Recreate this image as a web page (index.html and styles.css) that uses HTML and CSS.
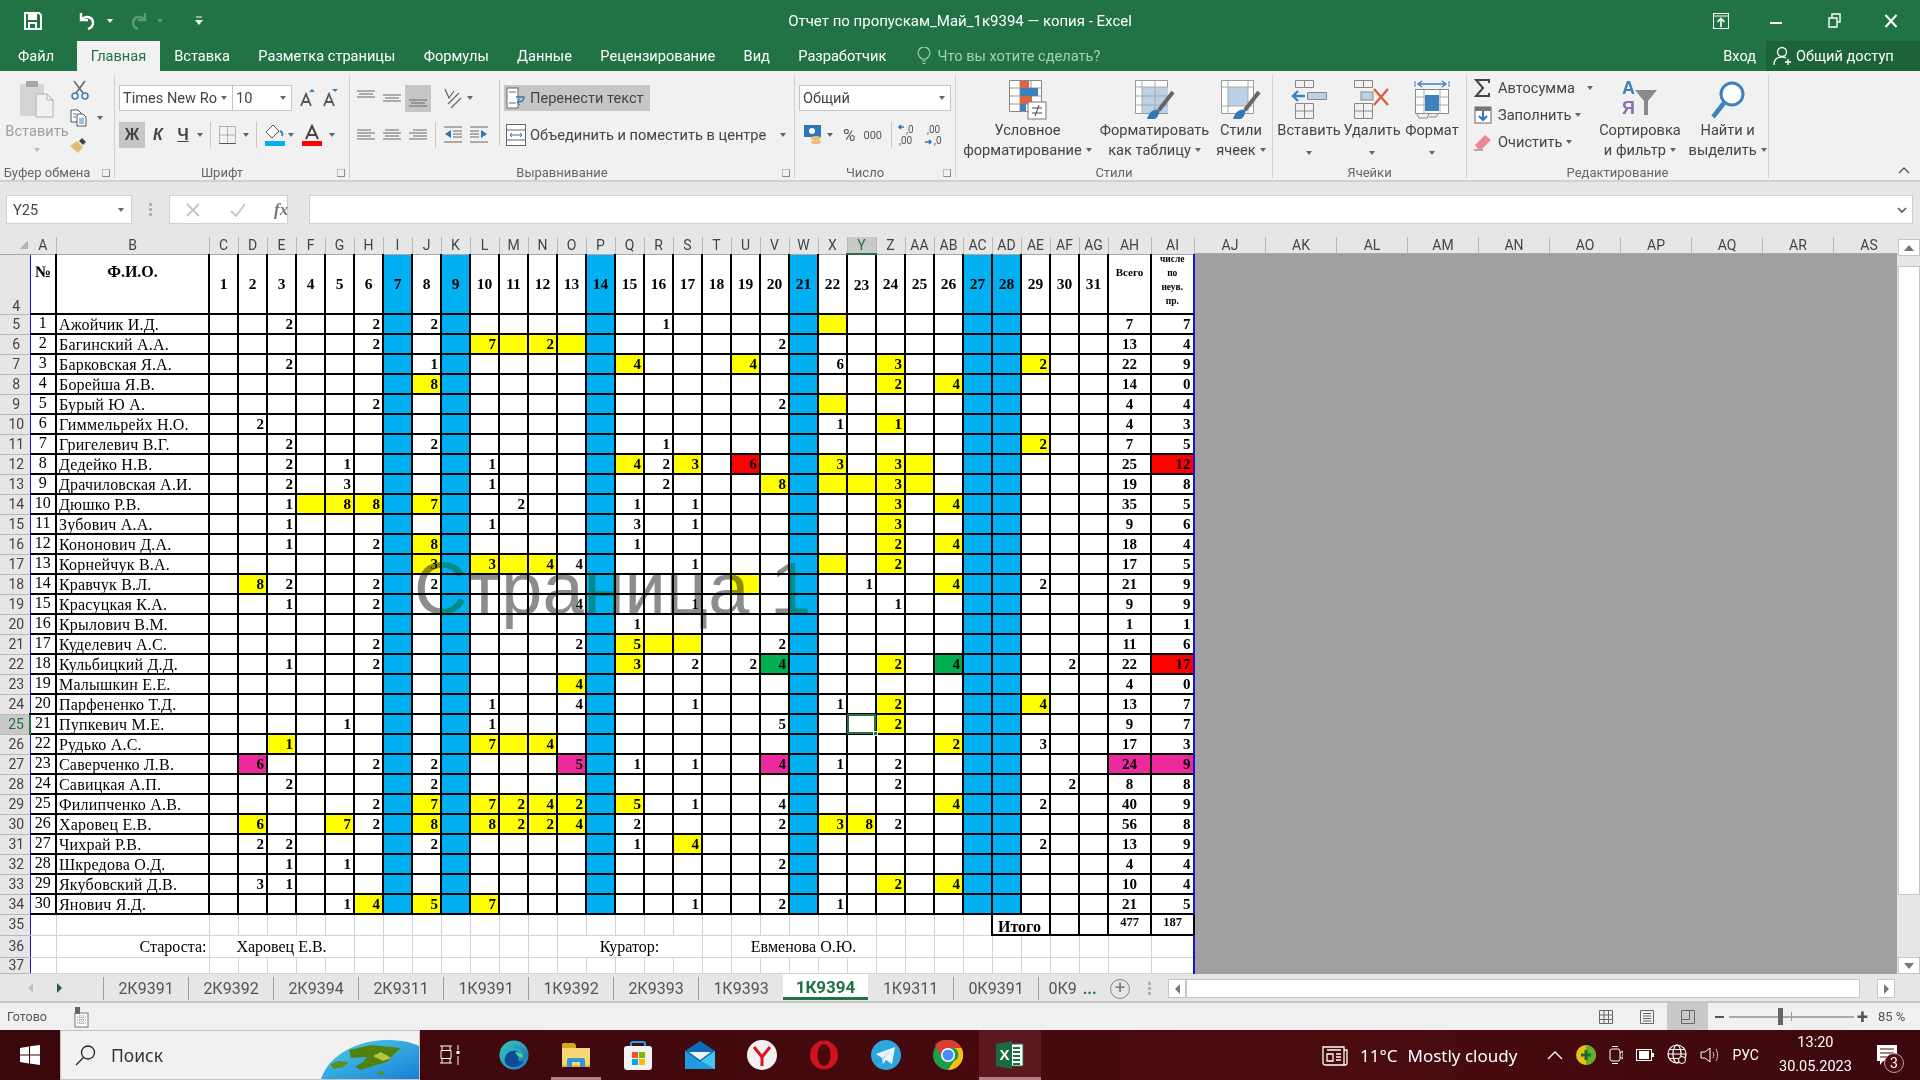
FILE: index.html
```html
<!DOCTYPE html>
<html lang="ru">

<head>
    <meta charset="utf-8">
    <title>Отчет по пропускам_Май_1к9394 — копия - Excel</title>
    <link rel="stylesheet" href="styles.css">
</head>

<body>
    <div class="app">
        <!-- title bar -->
        <header class="titlebar">
            <div class="qat">
                <svg class="qat-save" width="20" height="18" viewBox="0 0 20 18"><path d="M2 1h14l2 2v14H2z" fill="none" stroke="#fff" stroke-width="2"/><rect x="5" y="2" width="9" height="6" fill="#fff"/><rect x="6" y="11" width="7" height="6" fill="none" stroke="#fff" stroke-width="2"/></svg>
                <svg class="qat-undo" width="20" height="20" viewBox="0 0 20 20"><path d="M3 2v7h7" fill="none" stroke="#fff" stroke-width="2.4"/><path d="M4 8c4-4 11-2 11 4 0 3-2 5-5 6" fill="none" stroke="#fff" stroke-width="2.4"/></svg>
                <span class="tri tri-white qat-caret-a"></span>
                <svg class="qat-redo" width="20" height="20" viewBox="0 0 20 20"><path d="M17 2v7h-7" fill="none" stroke="#5c9b78" stroke-width="2.4"/><path d="M16 8c-4-4-11-2-11 4 0 3 2 5 5 6" fill="none" stroke="#5c9b78" stroke-width="2.4"/></svg>
                <span class="tri tri-faded qat-caret-b"></span>
                <svg class="qat-more" width="8" height="10" viewBox="0 0 8 10"><path d="M1 1h6" stroke="#fff"/><path d="M0 4h8L4 9z" fill="#fff"/></svg>
            </div>
            <div class="doc-title">Отчет по пропускам_Май_1к9394 — копия - Excel</div>
            <div class="win-btns">
                <svg width="16" height="16" viewBox="0 0 16 16"><rect x=".5" y=".5" width="15" height="15" fill="none" stroke="#fff"/><path d="M1 3h14" stroke="#fff"/><path d="M8 14V6M4.5 9 8 5.5 11.5 9" fill="none" stroke="#fff" stroke-width="1.6"/></svg>
                <svg class="win-min" width="12" height="12" viewBox="0 0 12 12"><path d="M0 8h12" stroke="#fff" stroke-width="2"/></svg>
                <svg class="win-max" width="14" height="16" viewBox="0 0 14 16"><path d="M1 5h8v9H1zM4 5V1h8v8H9" fill="none" stroke="#fff" stroke-width="1.4"/></svg>
                <svg class="win-close" width="14" height="14" viewBox="0 0 14 14"><path d="M1.5 1 12.5 13M12.5 1 1.5 13" stroke="#fff" stroke-width="2"/></svg>
            </div>
        </header>

        <!-- ribbon tabs -->
        <nav class="tabs">
            <span class="tab tab-file">Файл</span>
            <span class="tab tab-active">Главная</span>
            <span class="tab">Вставка</span>
            <span class="tab">Разметка страницы</span>
            <span class="tab">Формулы</span>
            <span class="tab">Данные</span>
            <span class="tab">Рецензирование</span>
            <span class="tab">Вид</span>
            <span class="tab">Разработчик</span>
            <span class="tell-me">
                <svg width="14" height="18" viewBox="0 0 14 18"><path d="M4.5 12C3 10 1 9 1 6a6 6 0 0 1 12 0c0 3-2 4-3.500 6z" fill="none" stroke="#a8cdb8" stroke-width="1.200"/><path d="M5 14h4M5.500 16.500h3" stroke="#a8cdb8" stroke-width="1.200"/></svg>
                Что вы хотите сделать?
            </span>
            <span class="sign-in">Вход</span>
            <span class="share">
                <svg width="20" height="20" viewBox="0 0 20 20"><circle cx="9" cy="6" r="4.500" fill="none" stroke="#fff" stroke-width="1.300"/><path d="M1 19c0-5 3-8 8-8 2 0 3 .5 4 1" fill="none" stroke="#fff" stroke-width="1.300"/><path d="M15 13v6M12 16h6" stroke="#fff" stroke-width="1.300"/></svg>
                Общий доступ
            </span>
        </nav>

        <!-- ribbon -->
        <section class="ribbon">
            <div class="group g-clip">
                <div class="group-body clip-body">
                    <div class="paste">
                        <svg width="36" height="38" viewBox="0 0 36 38"><rect x="1" y="4" width="24" height="32" fill="#d6d3d3"/><rect x="7" y="1" width="12" height="6" rx="1" fill="#a9a6a6"/><path d="M17 14h11l6 6v17H17z" fill="#f3f0f3" stroke="#b3b0b0"/><path d="M28 14v6h6" fill="none" stroke="#b3b0b0"/></svg>
                        <span class="paste-label">Вставить</span>
                        <span class="tri tri-faint"></span>
                    </div>
                    <div class="clip-tools">
                        <svg width="20" height="20" viewBox="0 0 20 20"><path d="M4 1l9 12M15 1 6 13" stroke="#666" stroke-width="1.500"/><circle cx="5" cy="16" r="3" fill="none" stroke="#3e7cc0" stroke-width="1.500"/><circle cx="15" cy="16" r="3" fill="none" stroke="#3e7cc0" stroke-width="1.500"/></svg>
                        <span class="copy-row">
                            <svg width="18" height="18" viewBox="0 0 18 18"><path d="M1 1h7l3 3v9H1z" fill="#fff" stroke="#555"/><path d="M7 5h6l3 3v9H7z" fill="#fff" stroke="#555"/><path d="M3 5h3M3 8h3M9 10h5M9 12h5M9 14h5" stroke="#3e7cc0"/></svg>
                            <span class="tri"></span>
                        </span>
                        <svg width="18" height="18" viewBox="0 0 18 18"><path d="M0 10 7 5l6 6-5 6z" fill="#e2bc72"/><path d="M9 5l3-3 4 4-3 3z" fill="#444"/></svg>
                    </div>
                </div>
                <div class="group-label label-side">Буфер обмена<span class="launcher"></span></div>
            </div>

            <div class="group g-font">
                <div class="group-body stack">
                    <div class="rib-row">
                        <span class="select sel-font">Times New Ro<span class="tri"></span></span>
                        <span class="select sel-size">10<span class="tri"></span></span>
                        <svg class="grow" width="16" height="20" viewBox="0 0 16 20"><path d="M1 18 6 6l5 12M3 14h6" fill="none" stroke="#555" stroke-width="1.800"/><path d="M9 4l3-3 3 3z" fill="#3e7cc0"/></svg>
                        <svg class="shrink" width="16" height="20" viewBox="0 0 16 20"><path d="M1 18 6 6l5 12M3 14h6" fill="none" stroke="#555" stroke-width="1.800"/><path d="M9 1l3 3 3-3z" fill="#3e7cc0"/></svg>
                    </div>
                    <div class="rib-row row-fmt">
                        <span class="fmt fmt-on">Ж</span>
                        <span class="fmt fmt-i">К</span>
                        <span class="fmt fmt-u">Ч</span>
                        <span class="tri"></span>
                        <span class="rib-sep sep-a"></span>
                        <svg class="borders-ico" width="17" height="18" viewBox="0 0 17 18"><path d="M.5.5h16v17H.5zM8.500.5v17M.5 9h16" fill="none" stroke="#777" stroke-dasharray="1 1"/><path d="M.5 17.500h16" stroke="#555"/></svg>
                        <span class="tri"></span>
                        <span class="rib-sep sep-b"></span>
                        <svg class="fill-ico" width="22" height="22" viewBox="0 0 22 22"><path d="M9 1 2 8l6 6 7-7z" fill="#fff" stroke="#555"/><path d="M16 7c2 1 3 3 2 5" fill="none" stroke="#3e7cc0" stroke-width="2"/><rect x="1" y="17" width="20" height="5" fill="#00b0f0"/></svg>
                        <span class="tri"></span>
                        <svg class="color-ico" width="22" height="22" viewBox="0 0 22 22"><path d="M5 15 11 2l6 13M7 11h8" fill="none" stroke="#444" stroke-width="2"/><rect x="1" y="17" width="20" height="5" fill="#f00"/></svg>
                        <span class="tri"></span>
                    </div>
                </div>
                <div class="group-label label-side">Шрифт<span class="launcher"></span></div>
            </div>

            <div class="group g-align">
                <div class="group-body align-body">
                    <div class="stack">
                        <div class="rib-row">
                            <svg class="al" width="26" height="27" viewBox="0 0 26 27"><path d="M4 6h18M6 9h14M4 12h18" stroke="#666"/></svg>
                            <svg class="al" width="26" height="27" viewBox="0 0 26 27"><path d="M4 10h18M6 13h14M4 16h18" stroke="#666"/></svg>
                            <svg class="al al-on" width="26" height="27" viewBox="0 0 26 27"><path d="M4 15h18M6 18h14M4 21h18" stroke="#666"/></svg>
                            <svg class="orient" width="20" height="22" viewBox="0 0 20 22"><path d="M3 2l4 9 5-7M6 17 17 6M9 21 19 11" fill="none" stroke="#666" stroke-width="1.200"/></svg>
                            <span class="tri"></span>
                        </div>
                        <div class="rib-row">
                            <svg class="al" width="26" height="26" viewBox="0 0 26 26"><path d="M4 8h14M4 11h18M4 14h14M4 17h18" stroke="#666"/></svg>
                            <svg class="al" width="26" height="26" viewBox="0 0 26 26"><path d="M6 8h14M4 11h18M6 14h14M4 17h18" stroke="#666"/></svg>
                            <svg class="al" width="26" height="26" viewBox="0 0 26 26"><path d="M8 8h14M4 11h18M8 14h14M4 17h18" stroke="#666"/></svg>
                            <span class="rib-sep sep-c"></span>
                            <svg class="al" width="26" height="26" viewBox="0 0 26 26"><path d="M4 5h18M13 9h9M13 12h9M13 15h9M4 20h18" stroke="#666"/><path d="M5 12l6-4v8z" fill="#2f75b5"/></svg>
                            <svg class="al" width="26" height="26" viewBox="0 0 26 26"><path d="M4 5h18M4 9h9M4 12h9M4 15h9M4 20h18" stroke="#666"/><path d="M21 12l-6-4v8z" fill="#2f75b5"/></svg>
                        </div>
                    </div>
                    <span class="rib-sep sep-d"></span>
                    <div class="stack">
                        <div class="wrap-btn">
                            <svg width="20" height="22" viewBox="0 0 20 22"><rect x="1" y="1" width="11" height="20" fill="#fff" stroke="#666"/><path d="M3 5h7M3 16h7" stroke="#666"/><path d="M10 10h8c0 4-2 5-6 5" fill="none" stroke="#2f75b5" stroke-width="1.400"/><path d="M14 12l-3 3 3 3" fill="none" stroke="#2f75b5"/></svg>
                            Перенести текст
                        </div>
                        <div class="merge-btn">
                            <svg width="20" height="22" viewBox="0 0 20 22"><rect x=".5" y=".5" width="19" height="21" fill="#fff" stroke="#666"/><path d="M1 6h18M1 16h18" stroke="#666"/><path d="M4 11h12M6 9l-2 2 2 2M14 9l2 2-2 2" fill="none" stroke="#2f75b5"/></svg>
                            Объединить и поместить в центре
                            <span class="tri"></span>
                        </div>
                    </div>
                </div>
                <div class="group-label label-side">Выравнивание<span class="launcher"></span></div>
            </div>

            <div class="group g-num">
                <div class="group-body stack">
                    <div class="rib-row">
                        <span class="select sel-num">Общий<span class="tri"></span></span>
                    </div>
                    <div class="rib-row row-num">
                        <svg width="20" height="22" viewBox="0 0 20 22"><rect x="1" y="1" width="17" height="12" fill="#2f75b5"/><circle cx="9" cy="7" r="3" fill="#fff"/><ellipse cx="13" cy="14" rx="5" ry="2" fill="#e5c07a"/><ellipse cx="13" cy="18" rx="5" ry="2" fill="#e5c07a"/></svg>
                        <span class="tri"></span>
                        <span class="num-pct">%</span>
                        <span class="num-000">000</span>
                        <span class="rib-sep sep-e"></span>
                        <svg width="24" height="24" viewBox="0 0 24 24"><path d="M7 4H2M4 2 2 4l2 2" fill="none" stroke="#2f75b5" stroke-width="1.500"/><text x="9" y="10" class="dec-txt">,0</text><text x="2" y="21" class="dec-txt">,00</text></svg>
                        <svg class="dec-b" width="24" height="24" viewBox="0 0 24 24"><path d="M2 19h6M6 17l2 2-2 2" fill="none" stroke="#2f75b5" stroke-width="1.500"/><text x="4" y="10" class="dec-txt">,00</text><text x="11" y="21" class="dec-txt">,0</text></svg>
                    </div>
                </div>
                <div class="group-label label-side">Число<span class="launcher"></span></div>
            </div>

            <div class="group g-styles">
                <div class="group-body big-row">
                    <div class="big big-cond">
                        <svg width="38" height="40" viewBox="0 0 38 40"><path d="M.5.5h32v31H.5z" fill="#fff" stroke="#888"/><path d="M11 1v30M22 1v30M1 8h32M1 16h32M1 24h32" stroke="#999"/><rect x="11" y="1" width="9" height="7" fill="#dc6542"/><rect x="11" y="8" width="18" height="8" fill="#3f81bc"/><rect x="11" y="16" width="12" height="8" fill="#dc6542"/><rect x="11" y="24" width="6" height="7" fill="#3f81bc"/><rect x="19" y="22" width="18" height="17" fill="#fff" stroke="#777"/><path d="M23 28h10M23 33h10M30 25l-4 11" stroke="#444"/></svg>
                        <span class="big-text">Условное</span>
                        <span class="big-text">форматирование<span class="tri tri-s"></span></span>
                    </div>
                    <div class="big big-table">
                        <svg width="40" height="40" viewBox="0 0 40 40"><path d="M.5.5h32v33H.5z" fill="#fff" stroke="#999"/><rect x="7" y="7" width="26" height="26" fill="#bcd0e6"/><path d="M7 1v33M20 1v33M1 7h32M1 16h32M1 25h32" stroke="#aaa"/><path d="M38 12 24 30" stroke="#666" stroke-width="4"/><path d="M12 39c2-7 7-11 13-9-1 4-3 9-6 9z" fill="#3477b5"/></svg>
                        <span class="big-text">Форматировать</span>
                        <span class="big-text">как таблицу<span class="tri tri-s"></span></span>
                    </div>
                    <div class="big big-cell">
                        <svg width="40" height="40" viewBox="0 0 40 40"><path d="M.5.5h32v33H.5z" fill="#fff" stroke="#999"/><rect x="7" y="7" width="20" height="19" fill="#bcd0e6"/><path d="M7 1v33M27 1v33M1 7h32M1 26h32" stroke="#aaa"/><path d="M38 12 24 30" stroke="#666" stroke-width="4"/><path d="M12 39c2-7 7-11 13-9-1 4-3 9-6 9z" fill="#3477b5"/></svg>
                        <span class="big-text">Стили</span>
                        <span class="big-text">ячеек<span class="tri tri-s"></span></span>
                    </div>
                </div>
                <div class="group-label">Стили</div>
            </div>

            <div class="group g-cells">
                <div class="group-body big-row">
                    <div class="big big-ins">
                        <svg width="36" height="40" viewBox="0 0 36 40"><path d="M4.500.5h18v7h-18zM13.500.5v7M16.500 12.500h19v7h-19zM26 12.500v7M4.500 23.500h18v15h-18zM13.500 23.500v15M4.500 31h18" fill="none" stroke="#888"/><path d="M14 16H3M7 11l-5 5 5 5" fill="none" stroke="#3f81bc" stroke-width="2.400"/><rect x="17" y="13" width="18" height="6" fill="#bcd0e6"/></svg>
                        <span class="big-text">Вставить</span>
                        <span class="tri tri-low"></span>
                    </div>
                    <div class="big big-del">
                        <svg width="36" height="40" viewBox="0 0 36 40"><path d="M.5.5h18v7H.5zM9.500.5v7M.5 23.500h18v15H.5zM9.500 23.500v15M.5 31h18" fill="none" stroke="#888"/><rect x="7" y="12" width="12" height="8" fill="#bcd0e6" stroke="#888"/><path d="M20 9l14 16M34 9 20 25" stroke="#d9603b" stroke-width="2.400"/></svg>
                        <span class="big-text">Удалить</span>
                        <span class="tri tri-low"></span>
                    </div>
                    <div class="big big-fmt">
                        <svg width="36" height="40" viewBox="0 0 36 40"><path d="M1 1v6M35 1v6" stroke="#3f81bc"/><path d="M4 4h28M8 1 4 4l4 3M28 1l4 3-4 3" fill="none" stroke="#3f81bc" stroke-width="1.300"/><path d="M1.500 9.500h33v24h-33z" fill="#fff" stroke="#888"/><path d="M10 10v24M26 10v24M1 17h34M1 25h34" stroke="#aaa"/><rect x="11" y="15" width="14" height="16" fill="#3f81bc"/><path d="M3 34l2 4h8l2-4M15 37h7l2-3" fill="none" stroke="#888"/></svg>
                        <span class="big-text">Формат</span>
                        <span class="tri tri-low"></span>
                    </div>
                </div>
                <div class="group-label">Ячейки</div>
            </div>

            <div class="group g-edit">
                <div class="group-body edit-body">
                    <div class="edit-list">
                        <div class="edit-item">
                            <svg width="18" height="18" viewBox="0 0 18 18"><path d="M15 4V1H2l7 8-7 8h13v-3" fill="none" stroke="#444" stroke-width="2"/></svg>
                            <span class="edit-text">Автосумма</span><span class="tri tri-wide"></span>
                        </div>
                        <div class="edit-item">
                            <svg width="18" height="18" viewBox="0 0 18 18"><rect x="1" y="1" width="16" height="16" fill="#fff" stroke="#666"/><rect x="1" y="1" width="16" height="4" fill="#777"/><path d="M9 5v9M5 10l4 4 4-4" fill="none" stroke="#2f75b5" stroke-width="2"/></svg>
                            <span class="edit-text">Заполнить</span><span class="tri"></span>
                        </div>
                        <div class="edit-item">
                            <svg width="18" height="18" viewBox="0 0 18 18"><path d="M1 12 11 2l6 5-9 9H4z" fill="#ee8799"/><path d="M0 17h9" stroke="#666"/></svg>
                            <span class="edit-text">Очистить</span><span class="tri"></span>
                        </div>
                    </div>
                    <div class="big big-sort">
                        <svg width="40" height="40" viewBox="0 0 40 40"><text x="2" y="14" class="az az-a">А</text><text x="2" y="34" class="az az-z">Я</text><path d="M15 10h22l-9 11v14h-4V21z" fill="#8a8a8a"/></svg>
                        <span class="big-text">Сортировка</span>
                        <span class="big-text">и фильтр<span class="tri tri-s"></span></span>
                    </div>
                    <div class="big big-find">
                        <svg width="40" height="40" viewBox="0 0 40 40"><circle cx="24" cy="14" r="11" fill="#fff" stroke="#3f81bc" stroke-width="3"/><path d="M16 23 5 37" stroke="#3f81bc" stroke-width="4.500"/></svg>
                        <span class="big-text">Найти и</span>
                        <span class="big-text">выделить<span class="tri tri-s"></span></span>
                    </div>
                </div>
                <div class="group-label">Редактирование</div>
            </div>
            <svg class="collapse-ico" width="12" height="8" viewBox="0 0 12 8"><path d="M1 7l5-5 5 5" fill="none" stroke="#555" stroke-width="1.400"/></svg>
        </section>

        <!-- formula bar -->
        <section class="formula-bar">
            <div class="name-box">Y25<span class="tri"></span></div>
            <span class="fx-dots"></span>
            <div class="fx-box">
                <svg width="14" height="14" viewBox="0 0 14 14"><path d="M1 1l12 12M13 1 1 13" stroke="#c4c4c4" stroke-width="1.800"/></svg>
                <svg class="fx-check" width="16" height="14" viewBox="0 0 16 14"><path d="M1 8l5 5L15 1" fill="none" stroke="#c4c4c4" stroke-width="1.800"/></svg>
                <span class="fx-label">fx</span>
            </div>
            <div class="fx-input">
                <svg width="10" height="6" viewBox="0 0 10 6"><path d="M1 1l4 4 4-4" fill="none" stroke="#555" stroke-width="1.600"/></svg>
            </div>
        </section>

        <!-- worksheet -->
        <section class="sheet-wrap">
            <div class="sheet-body">
                <div class="grid-clip">
                    <table class="grid" id="grid"></table>
                </div>
                <div class="outside">
                    <div class="outside-head" id="outsideHead"></div>
                    <div class="outside-fill"></div>
                </div>
                <div class="page-mark">Страница 1</div>
            </div>
            <div class="vscroll">
                <span class="vs-btn"><span class="tri tri-up"></span></span>
                <span class="vs-thumb"></span>
                <span class="vs-btn"><span class="tri tri-big"></span></span>
            </div>
        </section>

        <!-- sheet tabs -->
        <section class="sheet-tabs">
            <div class="sheet-nav">
                <span class="nav-l"></span>
                <span class="nav-r"></span>
            </div>
            <span class="stab">2К9391</span>
            <span class="stab">2К9392</span>
            <span class="stab">2К9394</span>
            <span class="stab">2К9311</span>
            <span class="stab">1К9391</span>
            <span class="stab">1К9392</span>
            <span class="stab">2К9393</span>
            <span class="stab">1К9393</span>
            <span class="stab stab-active">1К9394</span>
            <span class="stab stab-after">1К9311</span>
            <span class="stab">0К9391</span>
            <span class="stab stab-cut">0К9<span class="stab-more">...</span></span>
            <span class="add-sheet">+</span>
            <span class="fx-dots tabs-dots"></span>
            <div class="hscroll">
                <span class="hs-btn"><span class="nav-l nav-gray"></span></span>
                <span class="hs-thumb"></span>
                <span class="hs-btn hs-right"><span class="nav-r nav-gray"></span></span>
            </div>
        </section>

        <!-- status bar -->
        <footer class="status">
            <span class="status-text">Готово</span>
            <svg class="macro-ico" width="15" height="22" viewBox="0 0 15 22"><rect x="1" y="7" width="13" height="14" fill="#fff" stroke="#777"/><rect x="1" y="1" width="5" height="7" fill="#666"/><path d="M3 11h9M3 14h9M3 17h9M6 9v10M9 9v10" stroke="#888" stroke-dasharray="1 1"/></svg>
            <div class="views">
                <span class="view-btn"><svg width="14" height="14" viewBox="0 0 14 14"><path d="M.5.5h13v13H.5zM5 .5v13M9.500.5v13M.5 5h13M.5 9.500h13" fill="none" stroke="#666"/></svg></span>
                <span class="view-btn"><svg width="14" height="14" viewBox="0 0 14 14"><path d="M.5.5h13v13H.5z" fill="none" stroke="#666"/><path d="M3 3.500h8M3 6h8M3 8.500h8M3 11h8" stroke="#666"/></svg></span>
                <span class="view-btn view-on"><svg width="14" height="14" viewBox="0 0 14 14"><path d="M.5.5h13v13H.5zM.5 9.500h8V.5" fill="none" stroke="#666"/></svg></span>
            </div>
            <div class="zoom">
                <span class="zoom-minus"></span>
                <span class="zoom-track"><span class="zoom-tick"></span><span class="zoom-knob"></span></span>
                <span class="zoom-plus">+</span>
                <span class="zoom-pct">85 %</span>
            </div>
        </footer>

        <!-- windows taskbar -->
        <footer class="taskbar">
            <div class="start">
                <svg width="20" height="20" viewBox="0 0 20 20"><path d="M0 3l9-1.500V9.500H0zM10 1.300 20 0v9.500H10zM0 10.500h9v8L0 17zM10 10.500h10V20l-10-1.500z" fill="#fff"/></svg>
            </div>
            <div class="search">
                <svg width="22" height="22" viewBox="0 0 22 22"><circle cx="13" cy="8.500" r="6.500" fill="none" stroke="#222" stroke-width="1.300"/><path d="M8.500 13.500 1 21" stroke="#222" stroke-width="1.300"/></svg>
                <span class="search-text">Поиск</span>
                <svg class="search-earth" width="98" height="39" viewBox="0 0 98 39"><defs><linearGradient id="sea" x1="0" y1="0" x2="1" y2="1"><stop offset="0" stop-color="#4ed0ec"/><stop offset="1" stop-color="#1a7fd4"/></linearGradient></defs><path d="M0 39C8 14 38 0 66 0c12 0 24 2 32 6v33z" fill="url(#sea)"/><path d="M28 10 50 5l30 3-8 7-6 7-14 4-12 4-6-3 8-5 4-5-16 1z" fill="#51800f"/><path d="M52 16l8-4 10 6-8 3z" fill="#b6c441"/><path d="M10 24l8-3 10 1-6 5-10 2z" fill="#5d8f1c"/><path d="M56 32l6-1 2 3-6 1z" fill="#5d8f1c"/></svg>
            </div>
            <div class="task-view">
                <svg width="22" height="20" viewBox="0 0 22 20"><path d="M1 1h12M3 1v4M11 1v4M2 5.500h10v8H2zM1 18h12M3 14v4M11 14v4" fill="none" stroke="#fff"/><path d="M19 0v5M19 11v9" stroke="#fff"/><rect x="17.500" y="6" width="3" height="3" fill="#fff"/></svg>
            </div>
            <span class="task-app">
                <svg width="30" height="30" viewBox="0 0 30 30"><defs><linearGradient id="edgeA" x1="0" y1="0" x2="1" y2="1"><stop offset="0" stop-color="#32c6b2"/><stop offset="1" stop-color="#1c7fd6"/></linearGradient></defs><circle cx="15" cy="15" r="14.500" fill="url(#edgeA)"/><path d="M30 16C29 8 20 4 13 8c7-1 12 3 11 8-1 2-4 2-7 1 3 6 10 5 13-1z" fill="#3b3b3b" opacity=".15"/><path d="M6 18c1-5 6-8 11-7 5 1 5 6 2 7-1 3 3 4 6 3-3 6-12 8-17 4-2-2-3-5-2-7z" fill="#0c4c94"/><path d="M16 12c3 0 7 1 8 4 0 1-2 2-4 1-2-1-2-3-4-5z" fill="#4bd88b"/></svg>
            </span>
            <span class="task-app task-running">
                <svg width="28" height="24" viewBox="0 0 28 24"><path d="M0 2a2 2 0 0 1 2-2h10l2 2v4H0z" fill="#d8a51e"/><path d="M0 5h28v19H0z" fill="#f8d775"/><path d="M0 22h28v2H0z" fill="#e2b54a"/><path d="M5 24v-7a2 2 0 0 1 2-2h14a2 2 0 0 1 2 2v7h-5v-5h-8v5z" fill="#2e96d9"/></svg>
            </span>
            <span class="task-app">
                <svg width="30" height="30" viewBox="0 0 30 30"><path d="M8 8V4a2 2 0 0 1 2-2h10a2 2 0 0 1 2 2v4" fill="none" stroke="#18a4e8" stroke-width="2"/><rect x="1" y="6" width="28" height="24" rx="3" fill="#f2f2f2"/><rect x="9" y="12" width="6" height="6" fill="#f25022"/><rect x="16" y="12" width="6" height="6" fill="#7fba00"/><rect x="9" y="19" width="6" height="6" fill="#00a4ef"/><rect x="16" y="19" width="6" height="6" fill="#ffb900"/></svg>
            </span>
            <span class="task-app">
                <svg width="30" height="28" viewBox="0 0 30 28"><path d="M0 10 15 0l15 10v18H0z" fill="#0c6cb8"/><path d="M4 11h22L15 19z" fill="#f2f2f2"/><path d="M0 10l15 11 15-11v18H0z" fill="#1f9be2"/><path d="M30 10 16 20l14 8z" fill="#45c6f2"/></svg>
            </span>
            <span class="task-app">
                <svg width="30" height="30" viewBox="0 0 30 30"><circle cx="15" cy="15" r="15" fill="#f2f2f2"/><path d="M7 7l8 10 8-10M15 16v10" fill="none" stroke="#d9181d" stroke-width="3"/></svg>
            </span>
            <span class="task-app">
                <svg width="30" height="30" viewBox="0 0 30 30"><ellipse cx="15" cy="15" rx="14" ry="14.500" fill="#cf1222"/><ellipse cx="15" cy="15" rx="6.500" ry="11" fill="#470a0e"/></svg>
            </span>
            <span class="task-app">
                <svg width="30" height="30" viewBox="0 0 30 30"><circle cx="15" cy="15" r="15" fill="#2fa5de"/><path d="M5 14 24 7l-3 17-6-4-3 4-1-6z" fill="#eaf6fc"/><path d="M11 18l9-8-7 9-1 5z" fill="#bcdcec"/></svg>
            </span>
            <span class="task-app">
                <svg width="30" height="30" viewBox="0 0 30 30"><circle cx="15" cy="15" r="15" fill="#1f9c47"/><path d="M15 0a15 15 0 0 1 13.500 8H15a7 7 0 0 0-7 8L2 5a15 15 0 0 1 13-5z" fill="#dc3e32"/><path d="M28.500 8A15 15 0 0 1 15 30l6-9a7 7 0 0 0 0-13z" fill="#fbc012"/><circle cx="15" cy="15" r="7" fill="#fff"/><circle cx="15" cy="15" r="5.500" fill="#4a8af4"/></svg>
            </span>
            <span class="task-app task-excel">
                <svg width="28" height="28" viewBox="0 0 28 28"><path d="M14 3h13v22H14z" fill="#fff" stroke="#1e7145"/><path d="M17 7h7M17 11h7M17 15h7M17 19h7M17 23h7" stroke="#1e7145" stroke-width="2"/><path d="M0 3 16 0v28L0 25z" fill="#1a6b41"/><text x="3.500" y="19" class="xl-x">X</text></svg>
            </span>

            <div class="tray">
                <svg class="tray-news" width="26" height="22" viewBox="0 0 26 22"><path d="M1 3h21v18H3a2 2 0 0 1-2-2zM22 6h3v13a2 2 0 0 1-2 2h-1" fill="none" stroke="#fff" stroke-width="1.300"/><path d="M5 6h14M5 10h6v7H5zM14 10h5M14 13h5M14 16h5" fill="none" stroke="#fff" stroke-width="1.300"/></svg>
                <span class="tray-weather"><span class="tray-temp">11°C</span>Mostly cloudy</span>
                <svg class="tray-caret" width="16" height="10" viewBox="0 0 16 10"><path d="M1 9l7-7 7 7" fill="none" stroke="#fff" stroke-width="1.300"/></svg>
                <svg class="tray-ico" width="20" height="20" viewBox="0 0 20 20"><circle cx="10" cy="10" r="10" fill="#e8c018"/><path d="M10 0a10 10 0 0 1 0 20z" fill="#5fb02c"/><path d="M10 5v10M5 10h10" stroke="#1c6a2c" stroke-width="3"/></svg>
                <svg class="tray-ico" width="14" height="20" viewBox="0 0 14 20"><rect x="1" y="4" width="10" height="12" rx="2" fill="none" stroke="#fff"/><path d="M3 1.500h6M3 18.500h6M11 8l3-2v8l-3-2" fill="none" stroke="#fff"/></svg>
                <svg class="tray-ico" width="18" height="14" viewBox="0 0 18 14"><rect x=".5" y="1.500" width="15" height="11" fill="none" stroke="#fff"/><rect x="3" y="3" width="10" height="8" fill="#fff"/><rect x="16" y="5" width="2" height="4" fill="#fff"/></svg>
                <svg class="tray-ico" width="20" height="22" viewBox="0 0 20 22"><circle cx="10" cy="10" r="9" fill="none" stroke="#fff" stroke-width="1.200"/><ellipse cx="10" cy="10" rx="4" ry="9" fill="none" stroke="#fff" stroke-width="1.200"/><path d="M1 10h18M2.500 5.500h15M2.500 14.500h15" stroke="#fff" stroke-width="1.200"/><circle cx="15" cy="16" r="3.500" fill="#470a0e" stroke="#fff"/></svg>
                <svg class="tray-ico" width="20" height="18" viewBox="0 0 20 18"><path d="M1 6h4l5-4v14l-5-4H1z" fill="none" stroke="#fff"/><path d="M13 6c1 2 1 4 0 6M16 3c2 4 2 8 0 12" fill="none" stroke="#ccc"/></svg>
                <span class="tray-lang">РУС</span>
                <span class="tray-clock"><span>13:20</span><span>30.05.2023</span></span>
                <span class="tray-notify">
                    <svg width="20" height="20" viewBox="0 0 20 20"><path d="M0 0h20v16H6l-3 4v-4H0z" fill="#fff"/><path d="M3 4h14M3 8h14M3 12h9" stroke="#470a0e" stroke-width="1.200"/></svg>
                    <span class="notify-badge">3</span>
                </span>
            </div>
        </footer>
    </div>

    <script src="sheet.js"></script>
</body>
</html>
```

FILE: styles.css
```css
* {
    box-sizing: border-box;
}

html, body {
    margin: 0;
    padding: 0;
    overflow: hidden;
}

body {
    width: 1920px;
    height: 1080px;
    font-family: Roboto, "Liberation Sans", sans-serif;
    font-size: 14.6px;
    color: #444;
}

svg {
    display: block;
    flex: none;
}

.app {
    display: flex;
    flex-direction: column;
    width: 1920px;
    height: 1080px;
    overflow: hidden;
    background: #f1f1f1;
}

/* small dropdown triangle */
.tri {
    display: inline-block;
    flex: none;
    width: 0;
    height: 0;
    border-left: 3.5px solid transparent;
    border-right: 3.5px solid transparent;
    border-top: 4px solid #666;
}

.tri-white { border-top-color: #fff; }
.tri-faded { border-top-color: #5c9b78; }
.tri-faint { border-top-color: #bbb; margin-top: 8px; }
.tri-s { margin-left: 4px; vertical-align: 3px; }
.tri-low { margin-top: 11px; }
.tri-big { border-left-width: 5px; border-right-width: 5px; border-top-width: 6px; border-top-color: #777; }
.tri-up { border-left-width: 5px; border-right-width: 5px; border-top: 0; border-bottom: 6px solid #777; }

/* title bar */
.titlebar {
    display: grid;
    grid-template-columns: 1fr auto 1fr;
    align-items: center;
    height: 41px;
    flex: none;
    background: #217346;
    color: #fff;
}

.qat {
    display: flex;
    align-items: center;
    padding-left: 23px;
}

.qat-undo { margin-left: 35px; }
.qat-caret-a { margin-left: 9px; }
.qat-redo { margin-left: 15px; }
.qat-caret-b { margin-left: 9px; }
.qat-more { margin-left: 32px; }

.doc-title {
    font-size: 15px;
}

.win-btns {
    display: flex;
    align-items: center;
    justify-content: flex-end;
    padding-right: 22px;
}

.win-min { margin-left: 41px; }
.win-max { margin-left: 46px; }
.win-close { margin-left: 42px; }

/* ribbon tabs */
.tabs {
    display: flex;
    align-items: stretch;
    height: 30px;
    flex: none;
    background: #217346;
    color: #fff;
    line-height: 30px;
}

.tab {
    padding: 0 14.2px;
}

.tab-file {
    width: 77px;
    padding: 0 0 0 18px;
}

.tab-active {
    width: 83px;
    padding: 0;
    background: #f1f1f1;
    color: #217346;
    text-align: center;
}

.tell-me {
    display: flex;
    align-items: center;
    gap: 7px;
    margin-left: 16px;
    color: #a8cdb8;
}

.sign-in {
    margin-left: auto;
    margin-right: 10px;
}

.share {
    display: flex;
    align-items: center;
    gap: 3px;
    width: 154px;
    padding-left: 7px;
    background: #1c6339;
}

/* ribbon */
.ribbon {
    display: flex;
    height: 111px;
    flex: none;
    padding-top: 4px;
    background: #f1f1f1;
    border-bottom: 2px solid #d0d0d0;
}

.group {
    display: flex;
    flex-direction: column;
    position: relative;
    height: 103px;
    border-right: 1px solid #d2d2d2;
}

.g-clip { width: 115px; }
.g-font { width: 235px; }
.g-align { width: 445px; }
.g-num { width: 161px; }
.g-styles { width: 317px; }
.g-cells { width: 194px; }
.g-edit { width: 302px; }

.group-body {
    flex: 1;
    min-height: 0;
}

.group-label {
    position: relative;
    height: 18px;
    margin-bottom: -4px;
    font-size: 13px;
    line-height: 18px;
    text-align: center;
    color: #666;
}

.label-side {
    padding-right: 20px;
}

/* dialog launcher, sits in the corner of the label */
.launcher {
    position: absolute;
    right: 4px;
    top: 5px;
    width: 8px;
    height: 8px;
    border: 1px solid #888;
    border-top-color: #bbb;
    border-left-color: #bbb;
}

.stack {
    display: flex;
    flex-direction: column;
    gap: 11px;
    padding-top: 10px;
}

.rib-row {
    display: flex;
    align-items: center;
    height: 26px;
}

.rib-sep {
    display: block;
    width: 1px;
    height: 26px;
    background: #c8c8c8;
    flex: none;
}

/* clipboard */
.clip-body {
    display: flex;
    padding: 5px 0 0 19px;
}

.paste {
    display: flex;
    flex-direction: column;
    align-items: center;
    width: 36px;
}

.paste-label {
    margin: 4px 0 0;
    white-space: nowrap;
    color: #a0a0a0;
}

.clip-tools {
    display: flex;
    flex-direction: column;
    gap: 9px;
    margin-left: 15px;
    padding-top: 0;
}

.copy-row {
    display: flex;
    align-items: center;
    gap: 9px;
}

/* font */
.g-font .stack {
    padding-left: 4px;
}

.select {
    display: flex;
    align-items: center;
    justify-content: space-between;
    height: 26px;
    padding: 0 5px 0 3px;
    background: #fff;
    border: 1px solid #c6c6c6;
}

.sel-font {
    width: 114px;
}

.sel-size {
    width: 60px;
    margin-left: -1px;
}

.grow { margin-left: 8px; }
.shrink { margin-left: 7px; }

.row-fmt {
    gap: 0;
}

.fmt {
    width: 26px;
    height: 26px;
    font: bold 16px/26px "Liberation Sans", sans-serif;
    text-align: center;
    color: #444;
}

.fmt-on { background: #c6c6c6; }
.fmt-i { font-style: italic; }
.fmt-u { width: 24px; text-decoration: underline; }

.row-fmt .tri { margin-left: 2px; }
.sep-a { margin-left: 7px; }
.borders-ico { margin-left: 8px; }
.row-fmt .borders-ico + .tri { margin-left: 7px; }
.sep-b { margin-left: 7px; }
.fill-ico { margin-left: 7px; }
.color-ico { margin-left: 7px; }
.row-fmt .color-ico + .tri { margin-left: 6px; }

/* alignment */
.align-body {
    display: flex;
    padding-left: 3px;
}

.al-on { background: #c6c6c6; }
.orient { margin-left: 11px; }
.rib-row .orient + .tri { margin-left: 5px; }
.sep-c { margin: 0 4px; }
.sep-d { height: 66px; margin: 5px 4px 0 7px; }

.wrap-btn, .merge-btn {
    display: flex;
    align-items: center;
    gap: 4px;
    height: 26px;
    padding-left: 2px;
    white-space: nowrap;
}

.wrap-btn {
    width: 146px;
    background: #c6c6c6;
}

.merge-btn .tri {
    margin-left: 10px;
}

/* number */
.g-num .stack {
    padding-left: 4px;
}

.sel-num {
    width: 152px;
}

.row-num {
    padding-left: 4px;
}

.row-num .tri { margin-left: 4px; }
.num-pct { margin-left: 10px; font-size: 17px; color: #555; }
.num-000 { margin-left: 8px; font-size: 11px; color: #555; }
.sep-e { margin: 0 5px 0 9px; }
.dec-b { margin-left: 2px; }

.dec-txt {
    font-size: 10px;
    fill: #555;
}

/* big buttons */
.big-row {
    display: flex;
    padding-top: 5px;
}

.big {
    display: flex;
    flex-direction: column;
    align-items: center;
    white-space: nowrap;
}

.big svg {
    margin-bottom: 0;
}

.big-text {
    height: 20px;
    line-height: 20px;
}

.big-cond { width: 143px; }
.big-table { width: 111px; }
.big-cell { width: 62px; }
.big-ins { width: 68px; padding-left: 4px; }
.big-del { width: 62px; }
.big-fmt { width: 58px; }

/* editing */
.edit-body {
    display: flex;
    padding: 0 0 0 7px;
}

.edit-list {
    display: flex;
    flex-direction: column;
    gap: 0;
    width: 130px;
    margin-top: -1px;
}

.edit-item {
    display: flex;
    align-items: center;
    height: 27px;
    white-space: nowrap;
}

.edit-text { margin: 0 4px 0 6px; }
.tri-wide { margin-left: 8px; }

.big-sort { width: 89px; padding-top: 5px; margin-left: -8px; }
.big-find { width: 81px; padding-top: 5px; margin-left: 3px; }

.az {
    font: bold 18px "Liberation Sans", sans-serif;
}

.az-a { fill: #3f81bc; }
.az-z { fill: #8d6cb5; }

.collapse-ico {
    margin: 91px 0 0 129px;
}

/* formula bar */
.formula-bar {
    display: flex;
    align-items: flex-start;
    height: 55px;
    flex: none;
    padding: 13px 6px 0;
    background: #e6e6e6;
}

.name-box {
    display: flex;
    align-items: center;
    justify-content: space-between;
    width: 126px;
    height: 29px;
    padding: 0 7px 0 6px;
    background: #fff;
    border: 1px solid #d0d0d0;
}

.fx-dots {
    display: block;
    width: 3px;
    height: 13px;
    margin: 8px 17px 0 17px;
    background: repeating-linear-gradient(#b0b0b0 0 3px, transparent 3px 5px);
}

.fx-box {
    display: flex;
    align-items: center;
    width: 119px;
    height: 29px;
    padding-left: 16px;
    background: #fff;
    border: 1px solid #d0d0d0;
}

.fx-check { margin-left: 30px; }

.fx-label {
    margin-left: 28px;
    font: italic bold 17px "Liberation Serif", serif;
    color: #777;
}

.fx-input {
    display: flex;
    align-items: center;
    justify-content: flex-end;
    width: 1604px;
    height: 29px;
    margin-left: 21px;
    padding-right: 5px;
    background: #fff;
    border: 1px solid #d0d0d0;
}

/* worksheet */
.sheet-wrap {
    display: flex;
    height: 737px;
    flex: none;
    background: #e6e6e6;
}

.sheet-body {
    display: flex;
    position: relative;
    width: 1897px;
    height: 737px;
    overflow: hidden;
}

.grid-clip {
    width: 1195px;
    height: 737px;
    overflow: hidden;
    flex: none;
    background: #fff;
}

.grid {
    table-layout: fixed;
    width: 1194px;
    border-collapse: collapse;
    font-family: "Liberation Serif", "Times New Roman", serif;
    color: #000;
}

.grid td, .grid th {
    padding: 0;
    overflow: hidden;
    white-space: nowrap;
}

.col-rowhead { width: 30px; }
.col-a { width: 26px; }
.col-b { width: 153px; }
.col-day { width: 29px; }
.col-sum { width: 43px; }

.row-letters { height: 17px; }
.row-title { height: 60px; }
.row-data { height: 20px; }
.row-sign { height: 22px; }
.row-tail { height: 16px; }

/* row and column headings */
.grid .h-col, .grid .h-row, .grid .h-corner {
    font-family: Roboto, "Liberation Sans", sans-serif;
    font-size: 14px;
    font-weight: 400;
    color: #444;
    background: #e6e6e6;
    text-align: center;
    line-height: 15px;
}

.grid .h-col {
    border-right: 1px solid #b8b8b8;
    border-bottom: 1px solid #a8a8a8;
}

.grid .h-corner {
    border-bottom: 1px solid #a8a8a8;
    background:
        linear-gradient(135deg, transparent 50%, #b4b4b4 50%) 20px 4px / 8px 8px no-repeat,
        #e6e6e6;
}

.grid .h-row {
    border-bottom: 1px solid #b8b8b8;
    padding-left: 3px;
}

.grid .h-row-title {
    vertical-align: bottom;
}

.grid .h-on {
    color: #217346;
    background: #c9c9c9;
}

.grid .h-col.h-on {
    border-bottom: 2px solid #217346;
}

.grid .h-row.h-on {
    border-right: 2px solid #217346;
}

/* black bordered table body */
.c {
    border: 2px solid #000;
    font-size: 15px;
    font-weight: 700;
    text-align: right;
    padding-right: 2px !important;
    line-height: 15px;
    position: relative;
}

.c-no {
    border-left: 1px solid #1414d2;
    font-size: 16px;
    font-weight: 400;
    text-align: center;
    line-height: 14px;
    padding: 0 0 3px !important;
}

.c-name {
    font-size: 16px;
    font-weight: 400;
    text-align: left;
    line-height: 15px;
    padding: 0 0 0 2px !important;
    letter-spacing: .2px;
}

.c-total {
    text-align: center;
    padding: 0 !important;
}

.c-last {
    border-right: 3px solid #1414d2;
}

.c-top {
    border-top: 0;
}

.c-head {
    vertical-align: middle;
    text-align: center;
    padding: 0 !important;
    font-size: 15.5px;
}

.c-head-top {
    vertical-align: top;
    padding-top: 9px !important;
    font-size: 16px;
}

.c-head-no {
    border-left: 1px solid #1414d2;
}

.c-head-small {
    font-size: 11px;
    padding-top: 10px !important;
}

.c-head-tiny {
    vertical-align: top;
    font-size: 9.5px;
    font-weight: 700;
    line-height: 14px;
    white-space: normal !important;
}

.tiny-lines {
    display: block;
    margin-top: -3px;
}

.fill-blue { background: #00b0f0; }
.fill-y { background: #ffff00; }
.fill-r { background: #ff0000; }
.fill-g { background: #00b050; }
.fill-p { background: #ec2a9c; }

/* plain rows under the table, only light gridlines */
.g {
    border: 1px solid #d4d4d4;
    font-size: 16px;
    line-height: 15px;
    text-align: center;
}

.g-first { border-left: 1px solid #1414d2; }
.g-last { border-right: 3px solid #1414d2; }
.g-right { text-align: right; padding-right: 2px !important; }

.g-box {
    border: 2px solid #000;
    font-weight: 700;
}

.g-sum {
    font-size: 12.5px;
    padding-bottom: 4px !important;
}

.g-itogo {
    font-size: 16px;
    text-align: left;
    padding: 4px 0 0 5px !important;
}

/* selected cell frame */
.sel-frame {
    position: absolute;
    left: -1px;
    top: -1px;
    right: -1px;
    bottom: -1px;
    border: 2px solid #217346;
}

.sel-handle {
    position: absolute;
    right: -4px;
    bottom: -4px;
    width: 5px;
    height: 5px;
    background: #217346;
    border: 1px solid #fff;
}

.c-selected {
    overflow: visible !important;
}

/* gray area beyond the print area */
.outside {
    display: flex;
    flex-direction: column;
    flex: 1;
    min-width: 0;
}

.outside-head {
    display: flex;
    height: 17px;
    flex: none;
    background: #e6e6e6;
    border-bottom: 1px solid #a8a8a8;
    overflow: hidden;
    font-size: 14px;
}

.outside-head span {
    width: 71px;
    flex: none;
    line-height: 16px;
    text-align: center;
    border-right: 1px solid #b8b8b8;
}

.outside-fill {
    flex: 1;
    background: #a0a0a0;
}

/* watermark over the sheet */
.page-mark {
    position: absolute;
    left: 414px;
    top: 315px;
    font: 74px/74px "Liberation Sans", sans-serif;
    color: #8c8c8c;
    white-space: nowrap;
    mix-blend-mode: darken;
    pointer-events: none;
}

.vscroll {
    display: flex;
    flex-direction: column;
    justify-content: space-between;
    width: 23px;
    flex: none;
    padding-left: 1px;
    background: #e6e6e6;
}

.vs-btn {
    display: flex;
    align-items: center;
    justify-content: center;
    height: 17px;
    margin-top: 2px;
    background: #fff;
    border: 1px solid #c6c6c6;
}

.vs-thumb {
    height: 629px;
    background: #fff;
    border: 1px solid #c6c6c6;
    margin-bottom: 51px;
}

/* sheet tabs */
.sheet-tabs {
    display: flex;
    align-items: stretch;
    height: 29px;
    flex: none;
    background: #e6e6e6;
    border-bottom: 2px solid #c6c6c6;
    font-size: 16px;
    line-height: 23px;
    white-space: nowrap;
}

.sheet-nav {
    display: flex;
    align-items: center;
    gap: 24px;
    width: 103px;
    padding-left: 28px;
}

.nav-l, .nav-r {
    display: block;
    width: 0;
    height: 0;
    border-top: 5px solid transparent;
    border-bottom: 5px solid transparent;
}

.nav-l { border-right: 5px solid #c0c0c0; }
.nav-r { border-left: 5px solid #1c6339; }
.nav-gray.nav-l { border-right-color: #777; }
.nav-gray.nav-r { border-left-color: #777; }

.stab {
    width: 85px;
    height: 23px;
    margin-top: 3px;
    text-align: center;
    border-left: 1px solid #9c9c9c;
    color: #555;
}

.stab-active {
    height: 26px;
    margin-top: 0;
    padding-top: 3px;
    font-size: 17px;
    font-weight: 700;
    background: #fff;
    color: #217346;
    border-left: 0;
    border-bottom: 3px solid #217346;
    line-height: 20px;
}

.stab-after {
    border-left: 0;
}

.stab-cut {
    width: 72px;
    padding-right: 4px;
}

.stab-more {
    margin-left: 6px;
    color: #217346;
    font-weight: 700;
}

.add-sheet {
    display: block;
    width: 20px;
    height: 20px;
    margin: 5px 0 0 0;
    border: 1.5px solid #888;
    border-radius: 50%;
    text-align: center;
    font-size: 18px;
    line-height: 16px;
    color: #777;
}

.tabs-dots {
    margin: 8px 17px 0 18px;
}

.hscroll {
    display: flex;
    align-items: center;
    gap: 0;
    width: 727px;
    height: 19px;
    margin-top: 5px;
}

.hs-btn {
    display: flex;
    align-items: center;
    justify-content: center;
    width: 18px;
    height: 19px;
    background: #fff;
    border: 1px solid #c6c6c6;
}

.hs-right {
    margin-left: 17px;
}

.hs-thumb {
    width: 674px;
    height: 19px;
    background: #fff;
    border: 1px solid #c6c6c6;
}

/* status bar */
.status {
    display: flex;
    align-items: center;
    height: 27px;
    flex: none;
    padding-left: 7px;
    background: #f0f0f0;
    font-size: 12.5px;
    color: #555;
}

.macro-ico {
    margin-left: 27px;
}

.views {
    display: flex;
    align-items: stretch;
    height: 27px;
    margin-left: auto;
}

.view-btn {
    display: flex;
    align-items: center;
    justify-content: center;
    width: 41px;
}

.view-on {
    background: #c9c9c9;
}

.zoom {
    display: flex;
    align-items: center;
    width: 212px;
    padding-left: 7px;
}

.zoom-minus {
    display: block;
    width: 9px;
    height: 2px;
    background: #555;
}

.zoom-track {
    display: block;
    position: relative;
    width: 125px;
    height: 2px;
    margin-left: 5px;
    background: #aaa;
}

.zoom-knob {
    position: absolute;
    left: 49px;
    top: -8px;
    width: 5px;
    height: 17px;
    background: #666;
}

.zoom-tick {
    position: absolute;
    left: 62px;
    top: -4px;
    width: 1px;
    height: 9px;
    background: #999;
}

.zoom-plus {
    margin-left: 3px;
    font-size: 20px;
    font-weight: 700;
    line-height: 20px;
}

.zoom-pct {
    margin-left: 10px;
    font-size: 13px;
}

/* taskbar */
.taskbar {
    display: flex;
    align-items: center;
    height: 50px;
    flex: none;
    background: linear-gradient(90deg, #3a070c, #470a0e 55%, #4a0b0f 70%, #3c080d);
    color: #fff;
}

.start {
    display: flex;
    align-items: center;
    justify-content: center;
    width: 60px;
    height: 50px;
    padding-right: 0;
}

.search {
    display: flex;
    align-items: center;
    position: relative;
    width: 360px;
    height: 50px;
    padding-left: 14px;
    background: #f2f1f0;
    border: 1px solid #c4c4c4;
    overflow: hidden;
}

.search-text {
    margin-left: 14px;
    font: 17.5px "Noto Sans", sans-serif;
    color: #333;
}

.search-earth {
    position: absolute;
    right: 0;
    bottom: 0;
}

.task-view {
    display: flex;
    align-items: center;
    justify-content: center;
    width: 63px;
    height: 50px;
    padding-right: 4px;
}

.task-app {
    display: flex;
    align-items: center;
    justify-content: center;
    width: 62px;
    height: 50px;
}

.task-running {
    position: relative;
}

.task-running::after, .task-excel::after {
    content: "";
    position: absolute;
    bottom: 0;
    height: 3px;
    background: #b67d82;
}

.task-running::after {
    left: 6px;
    right: 6px;
}

.task-excel {
    position: relative;
    background: #5c181e;
}

.task-excel::after {
    left: 0;
    right: 0;
}

.xl-x {
    font: bold 15px "Liberation Sans", sans-serif;
    fill: #fff;
}

.tray {
    display: flex;
    align-items: center;
    flex: 1;
    height: 50px;
}

.tray-news { margin-left: 281px; }

.tray-weather {
    margin-left: 12px;
    font: 17px "Noto Sans", sans-serif;
    white-space: nowrap;
}

.tray-temp { margin-right: 10px; }

.tray-caret { margin-left: 30px; }
.tray-ico { margin-left: 13px; }

.tray-lang {
    margin-left: 12px;
    font-size: 14px;
}

.tray-clock {
    display: flex;
    flex-direction: column;
    align-items: center;
    gap: 4px;
    margin-left: 20px;
    font-size: 14.5px;
    line-height: 20px;
}

.tray-notify {
    position: relative;
    margin-left: 25px;
}

.notify-badge {
    position: absolute;
    left: 7px;
    top: 8px;
    width: 20px;
    height: 20px;
    border-radius: 50%;
    background: #4a0b0f;
    border: 1px solid #c0a0a0;
    text-align: center;
    font-size: 14px;
    line-height: 18px;
}
```

FILE: sheet.js
```javascript
// fills the worksheet table; days are written as day:value+fill (y r g p)
var students = [
    ['Ажойчик И.Д.', '3:2 6:2 8:2 16:1 22:y', '7', '7'],
    ['Багинский А.А.', '6:2 10:7y 11:y 12:2y 13:y 20:2', '13', '4'],
    ['Барковская Я.А.', '3:2 8:1 15:4y 19:4y 22:6 24:3y 29:2y', '22', '9'],
    ['Борейша Я.В.', '8:8y 24:2y 26:4y', '14', '0'],
    ['Бурый Ю А.', '6:2 20:2 22:y', '4', '4'],
    ['Гиммельрейх Н.О.', '2:2 22:1 24:1y', '4', '3'],
    ['Григелевич В.Г.', '3:2 8:2 16:1 29:2y', '7', '5'],
    ['Дедейко Н.В.', '3:2 5:1 10:1 15:4y 16:2 17:3y 19:6r 22:3y 24:3y 25:y', '25', '12r'],
    ['Драчиловская А.И.', '3:2 5:3 10:1 16:2 20:8y 22:y 23:y 24:3y 25:y', '19', '8'],
    ['Дюшко Р.В.', '3:1 4:y 5:8y 6:8y 8:7y 11:2 15:1 17:1 24:3y 26:4y', '35', '5'],
    ['Зубович А.А.', '3:1 10:1 15:3 17:1 24:3y', '9', '6'],
    ['Кононович Д.А.', '3:1 6:2 8:8y 15:1 24:2y 26:4y', '18', '4'],
    ['Корнейчук В.А.', '8:3y 10:3y 11:y 12:4y 13:4 17:1 22:y 24:2y', '17', '5'],
    ['Кравчук В.Л.', '2:8y 3:2 6:2 8:2 19:y 23:1 26:4y 29:2', '21', '9'],
    ['Красуцкая К.А.', '3:1 6:2 13:4 17:1 24:1', '9', '9'],
    ['Крылович В.М.', '15:1', '1', '1'],
    ['Куделевич А.С.', '6:2 13:2 15:5y 16:y 17:y 20:2', '11', '6'],
    ['Кульбицкий Д.Д.', '3:1 6:2 15:3y 17:2 19:2 20:4g 24:2y 26:4g 30:2', '22', '17r'],
    ['Малышкин Е.Е.', '13:4y', '4', '0'],
    ['Парфененко Т.Д.', '10:1 13:4 17:1 22:1 24:2y 29:4y', '13', '7'],
    ['Пупкевич М.Е.', '5:1 10:1 20:5 24:2y', '9', '7'],
    ['Рудько А.С.', '3:1y 10:7y 11:y 12:4y 26:2y 29:3', '17', '3'],
    ['Саверченко Л.В.', '2:6p 6:2 8:2 13:5p 15:1 17:1 20:4p 22:1 24:2', '24p', '9p'],
    ['Савицкая А.П.', '3:2 8:2 24:2 30:2', '8', '8'],
    ['Филипченко А.В.', '6:2 8:7y 10:7y 11:2y 12:4y 13:2y 15:5y 17:1 20:4 26:4y 29:2', '40', '9'],
    ['Харовец Е.В.', '2:6y 5:7y 6:2 8:8y 10:8y 11:2y 12:2y 13:4y 15:2 20:2 22:3y 23:8y 24:2', '56', '8'],
    ['Чихрай Р.В.', '2:2 3:2 8:2 15:1 17:4y 29:2', '13', '9'],
    ['Шкредова О.Д.', '3:1 5:1 20:2', '4', '4'],
    ['Якубовский Д.В.', '2:3 3:1 24:2y 26:4y', '10', '4'],
    ['Янович Я.Д.', '5:1 6:4y 8:5y 10:7y 17:1 20:2 22:1', '21', '5']
];

var blueDays = [7, 9, 14, 21, 27, 28];
var selectedDay = 23; // column Y
var selectedRow = 25;

function colName(i) {
    // i = 0 is column A
    var s = '';
    i = i + 1;
    while (i > 0) {
        var m = (i - 1) % 26;
        s = String.fromCharCode(65 + m) + s;
        i = Math.floor((i - 1) / 26);
    }
    return s;
}

function cell(parent, tag, cls, text, span) {
    var el = document.createElement(tag);
    el.className = cls;
    if (text) el.textContent = text;
    if (span) el.colSpan = span;
    parent.appendChild(el);
    return el;
}

function isBlue(day) {
    return blueDays.indexOf(day) >= 0;
}

function withFill(value) {
    var m = /^(\d*)([yrgp]?)$/.exec(value);
    return { text: m[1], fill: m[2] ? ' fill-' + m[2] : '' };
}

function addRowHead(row, number, extra) {
    cell(row, 'th', 'h-row' + (extra || ''), number ? String(number) : '');
}

function buildColumns(table) {
    var group = cell(table, 'colgroup', '');
    cell(group, 'col', 'col-rowhead');
    cell(group, 'col', 'col-a');
    cell(group, 'col', 'col-b');
    for (var d = 1; d <= 31; d++) cell(group, 'col', 'col-day');
    cell(group, 'col', 'col-sum');
    cell(group, 'col', 'col-sum');
}

function buildLetters(table) {
    var row = cell(table, 'tr', 'row-letters');
    cell(row, 'th', 'h-corner');
    for (var i = 0; i < 35; i++) {
        cell(row, 'th', 'h-col' + (i === selectedDay + 1 ? ' h-on' : ''), colName(i));
    }
}

function buildTitle(table) {
    var row = cell(table, 'tr', 'row-title');
    addRowHead(row, 4, ' h-row-title');
    cell(row, 'td', 'c c-top c-head c-head-top c-head-no', '№');
    cell(row, 'td', 'c c-top c-head c-head-top', 'Ф.И.О.');
    for (var d = 1; d <= 31; d++) {
        cell(row, 'td', 'c c-top c-head' + (isBlue(d) ? ' fill-blue' : ''), String(d));
    }
    cell(row, 'td', 'c c-top c-head c-head-top c-head-small', 'Всего');
    var last = cell(row, 'td', 'c c-top c-last c-head c-head-tiny');
    var lines = cell(last, 'span', 'tiny-lines');
    lines.innerHTML = 'числе<br>по<br>неув.<br>пр.';
}

function buildStudents(table) {
    students.forEach(function (student, index) {
        var sheetRow = index + 5;
        var row = cell(table, 'tr', 'row-data');
        addRowHead(row, sheetRow, sheetRow === selectedRow ? ' h-on' : '');
        cell(row, 'td', 'c c-no', String(index + 1));
        cell(row, 'td', 'c c-name', student[0]);

        var marks = {};
        student[1].split(' ').forEach(function (mark) {
            var parts = mark.split(':');
            marks[parts[0]] = parts[1];
        });

        for (var d = 1; d <= 31; d++) {
            var v = withFill(marks[d] || '');
            var cls = 'c' + v.fill + (isBlue(d) ? ' fill-blue' : '');
            var td = cell(row, 'td', cls, v.text);
            if (d === selectedDay && sheetRow === selectedRow) {
                td.classList.add('c-selected');
                var frame = cell(td, 'span', 'sel-frame');
                cell(frame, 'span', 'sel-handle');
            }
        }

        var sum = withFill(student[2]);
        var rest = withFill(student[3]);
        cell(row, 'td', 'c c-total' + sum.fill, sum.text);
        cell(row, 'td', 'c c-last' + rest.fill, rest.text);
    });
}

function buildTotals(table) {
    var row = cell(table, 'tr', 'row-data');
    addRowHead(row, 35);
    cell(row, 'td', 'g g-first');
    cell(row, 'td', 'g');
    for (var d = 1; d <= 27; d++) cell(row, 'td', 'g');
    cell(row, 'td', 'g g-box g-itogo', 'Итого', 2);
    cell(row, 'td', 'g g-box');
    cell(row, 'td', 'g g-box');
    cell(row, 'td', 'g g-box g-sum', '477');
    cell(row, 'td', 'g g-box g-sum g-last', '187');
}

function buildSigns(table) {
    var row = cell(table, 'tr', 'row-sign');
    addRowHead(row, 36);
    cell(row, 'td', 'g g-first');
    cell(row, 'td', 'g g-right', 'Староста:');
    cell(row, 'td', 'g', 'Харовец Е.В.', 5);
    for (var a = 0; a < 7; a++) cell(row, 'td', 'g');
    cell(row, 'td', 'g', 'Куратор:', 5);
    cell(row, 'td', 'g');
    cell(row, 'td', 'g', 'Евменова О.Ю.', 5);
    for (var b = 0; b < 10; b++) cell(row, 'td', 'g');
    cell(row, 'td', 'g g-last');
}

function buildBlank(table, number, rowClass) {
    var row = cell(table, 'tr', rowClass);
    addRowHead(row, number);
    cell(row, 'td', 'g g-first');
    for (var i = 0; i < 33; i++) cell(row, 'td', 'g');
    cell(row, 'td', 'g g-last');
}

document.addEventListener('DOMContentLoaded', function () {
    var table = document.getElementById('grid');
    buildColumns(table);
    buildLetters(table);
    buildTitle(table);
    buildStudents(table);
    buildTotals(table);
    buildSigns(table);
    buildBlank(table, 37, 'row-tail');
    buildBlank(table, 0, 'row-data');

    var head = document.getElementById('outsideHead');
    for (var i = 35; i < 45; i++) cell(head, 'span', '', colName(i));
});
```
